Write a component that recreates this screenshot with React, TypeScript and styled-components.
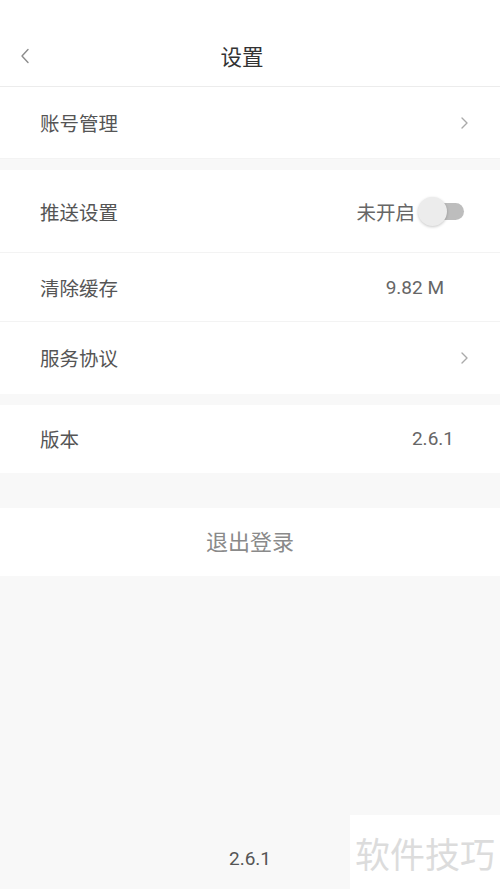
import styled, { createGlobalStyle } from 'styled-components';

const GlobalStyle = createGlobalStyle`
	html, body {
		margin: 0;
		padding: 0;
		background: #f8f8f8;
	}
	body {
		font-family: 'Noto Sans CJK SC', 'Noto Sans', Roboto, sans-serif;
	}
`;

const Page = styled.div`
	position: relative;
	display: flex;
	flex-direction: column;
	width: 500px;
	min-height: 889px;
	background: #f8f8f8;
	overflow: hidden;
`;

const Header = styled.header`
	position: relative;
	display: flex;
	align-items: center;
	justify-content: center;
	height: 86px;
	background: #fff;
	border-bottom: 1px solid #ececec;
`;

const BackButton = styled.button`
	position: absolute;
	left: 17px;
	top: 46px;
	display: flex;
	padding: 2px;
	border: 0;
	background: none;
`;

const Title = styled.h1`
	margin: 24px 16px 0 0;
	font-size: 21.5px;
	font-weight: 400;
	color: #333;
`;

const Group = styled.section<{ gap: number }>`
	margin-top: ${({ gap }) => gap}px;
	background: #fff;
`;

const Row = styled.div<{ h: number; last?: boolean }>`
	display: flex;
	align-items: center;
	height: ${({ h }) => h}px;
	padding: 0 30px 0 40px;
	border-bottom: 1px solid ${({ last }) => (last ? 'transparent' : '#f3f3f3')};
	box-sizing: border-box;
`;

const Label = styled.span`
	flex: 1;
	font-size: 19.5px;
	color: #555;
`;

const Value = styled.span<{ pad?: number }>`
	font-family: Roboto, 'Noto Sans CJK SC', sans-serif;
	font-size: 19px;
	color: #666;
	margin-right: ${({ pad }) => pad ?? 0}px;
`;

const Status = styled.span`
	font-size: 19.5px;
	color: #666;
	margin-right: 4px;
`;

const Track = styled.div`
	position: relative;
	width: 45px;
	height: 17px;
	margin-right: 6px;
	border-radius: 9px;
	background: #bdbdbd;
`;

const Knob = styled.div`
	position: absolute;
	left: -1px;
	top: -6px;
	width: 29px;
	height: 29px;
	border-radius: 50%;
	background: #ececec;
	box-shadow: 0 1px 3px rgba(0, 0, 0, 0.22);
`;

const LogoutRow = styled.button`
	display: flex;
	align-items: center;
	justify-content: center;
	width: 100%;
	height: 68px;
	margin-top: 35px;
	padding: 0 0 5px;
	border: 0;
	background: #fff;
	font-family: 'Noto Sans CJK SC', sans-serif;
	font-size: 22px;
	color: #8a8a8a;
`;

const Footer = styled.footer`
	margin-top: auto;
	padding-bottom: 19px;
	text-align: center;
	font-family: Roboto, sans-serif;
	font-size: 19px;
	color: #555;
`;

const Watermark = styled.div`
	position: absolute;
	right: 0;
	bottom: 0;
	width: 150px;
	height: 74px;
	display: flex;
	align-items: center;
	justify-content: center;
	background: #fff;
	font-size: 35px;
	color: #dcdcdc;
`;

const Chevron = ({ left }: { left?: boolean }) => (
	<svg width="12" height="16" viewBox="0 0 12 16" fill="none">
		<path
			d={left ? 'M9 1.5 L3 8 L9 14.5' : 'M4 3 L9 8 L4 13'}
			stroke={left ? '#8c8c8c' : '#aaa'}
			strokeWidth="1.4"
			strokeLinecap="round"
			strokeLinejoin="round"
		/>
	</svg>
);

const App = () => {
	return (
		<Page>
			<GlobalStyle />
			<Header>
				<BackButton>
					<Chevron left />
				</BackButton>
				<Title>设置</Title>
			</Header>

			<Group gap={0}>
				<Row h={72}>
					<Label>账号管理</Label>
					<Chevron />
				</Row>
			</Group>

			<Group gap={11}>
				<Row h={83}>
					<Label>推送设置</Label>
					<Status>未开启</Status>
					<Track>
						<Knob />
					</Track>
				</Row>
				<Row h={69}>
					<Label>清除缓存</Label>
					<Value pad={26}>9.82 M</Value>
				</Row>
				<Row h={72} last>
					<Label>服务协议</Label>
					<Chevron />
				</Row>
			</Group>

			<Group gap={11}>
				<Row h={68} last>
					<Label>版本</Label>
					<Value pad={16}>2.6.1</Value>
				</Row>
			</Group>

			<LogoutRow>退出登录</LogoutRow>

			<Footer>2.6.1</Footer>
			<Watermark>软件技巧</Watermark>
		</Page>
	);
};

export default App;
